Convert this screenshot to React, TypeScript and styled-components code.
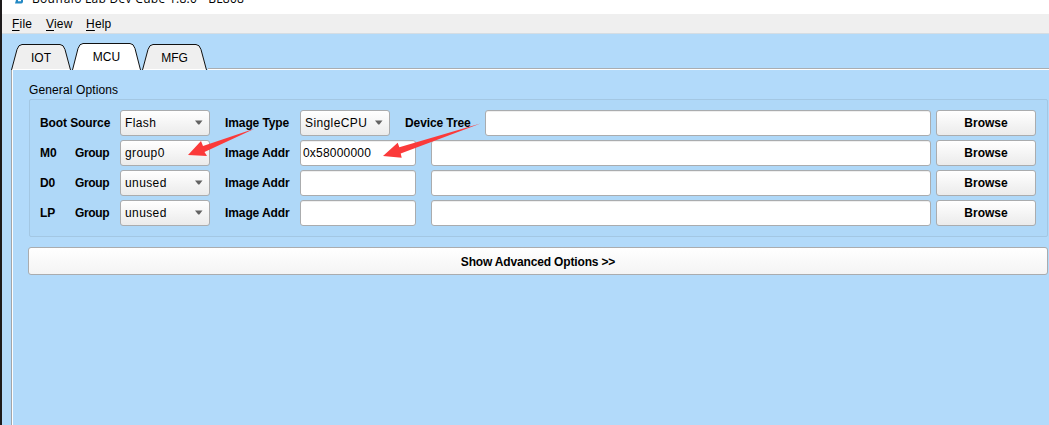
import React from "react";
import styled, { createGlobalStyle } from "styled-components";

const Global = createGlobalStyle`
  * { box-sizing: border-box; }
  html, body { margin: 0; padding: 0; overflow: hidden; }
  body { font: 12px "Liberation Sans", Arial, sans-serif; color: #000; }
`;

const Shell = styled.div`
  position: relative;
  width: 1049px;
  height: 425px;
  display: flex;
  background: #b2dafa;
  overflow: hidden;
`;
const DesktopEdge = styled.div`
  flex: 0 0 2px;
  background: #1d1a1b;
`;
const Window = styled.div`
  flex: 1;
  min-width: 0;
  display: flex;
  flex-direction: column;
`;
const TitleBar = styled.div`
  height: 14px;
  background: #fff;
  display: flex;
  align-items: flex-end;
  padding-left: 13px;
  overflow: hidden;
`;
const AppIcon = styled.svg`
  flex: none;
  width: 9px;
  height: 14px;
`;
const Title = styled.span`
  margin-left: 8px;
  height: 17px;
  font: 12px/17px "Open Sans", sans-serif;
  letter-spacing: 0.29px;
  white-space: pre;
  position: relative;
  top: -7px;
`;
const MenuBar = styled.nav`
  height: 20px;
  background: #efefef;
  border-bottom: 1px solid #d5dde3;
  display: flex;
  gap: 14px;
  padding-left: 10px;
  line-height: 20px;
`;
const MenuItem = styled.span<{ $w: number }>`
  width: ${(p) => p.$w}px;
  letter-spacing: 0.2px;
  white-space: nowrap;
  &::first-letter { text-decoration: underline; text-underline-offset: 2px; }
`;
const Tabs = styled.div`
  display: flex;
  align-items: flex-end;
  height: 36px;
  padding-left: 9px;
`;
const TabBox = styled.div<{ $w: number }>`
  width: ${(p) => p.$w}px;
  height: 28px;
  display: grid;
  margin-right: 1px;
  > * { grid-area: 1 / 1; }
`;
const TabLabel = styled.span<{ $active?: boolean }>`
  text-align: center;
  line-height: ${(p) => (p.$active ? 31 : 33)}px;
  height: 28px;
`;
const TabFill = styled.div`
  flex: 1;
  height: 2px;
  background: #fff;
  border-top: 1px solid #a9adb1;
`;
const Pane = styled.main`
  flex: 1;
  margin-left: 9px;
  border-left: 1px solid #a3a5a8;
  box-shadow: inset 1px 0 #fff;
  padding: 12px 1px 0 16px;
`;
const GroupTitle = styled.div`
  height: 17px;
  line-height: 17px;
  padding-left: 1px;
  letter-spacing: 0.12px;
`;
const Group = styled.section`
  height: 138px;
  margin-left: 1px;
  border: 1px solid #a3c7e3;
  border-radius: 2px;
  background: #afd8f8;
  padding: 10px 11px 0 10px;
  display: flex;
  flex-direction: column;
  gap: 4px;
`;
const Row = styled.div`
  display: flex;
  height: 26px;
`;
const Label = styled.span<{ $w: number; $ls?: number }>`
  flex: 0 0 ${(p) => p.$w}px;
  font-weight: bold;
  line-height: 26px;
  letter-spacing: ${(p) => p.$ls ?? -0.1}px;
  white-space: nowrap;
`;
const Select = styled.div`
  flex: 0 0 90px;
  height: 26px;
  margin-right: 15px;
  display: flex;
  align-items: center;
  justify-content: space-between;
  padding: 0 6px 0 4px;
  border: 1px solid #aaacae;
  border-radius: 3px;
  background: linear-gradient(#fff, #ebebeb);
  letter-spacing: 0.4px;
`;
const Chevron = styled.svg`
  width: 8px;
  height: 5px;
  margin-bottom: 2px;
`;
const Field = styled.div<{ $w?: number }>`
  flex: ${(p) => (p.$w ? `0 0 ${p.$w}px` : "1")};
  height: 26px;
  margin-right: ${(p) => (p.$w ? 15 : 5)}px;
  padding-left: 2px;
  line-height: 24px;
  border: 1px solid #aaacae;
  border-radius: 3px;
  background: #fff;
  box-shadow: inset 0 1px #efefef;
  letter-spacing: 0.2px;
`;
const Button = styled.button<{ $wide?: boolean }>`
  flex: 0 0 100px;
  width: ${(p) => (p.$wide ? "100%" : "100px")};
  height: ${(p) => (p.$wide ? 28 : 26)}px;
  margin-top: ${(p) => (p.$wide ? 10 : 0)}px;
  padding: ${(p) => (p.$wide ? "1px 0 0" : "0")};
  border: 1px solid #aaacae;
  border-radius: 3px;
  background: linear-gradient(#fff, ${(p) => (p.$wide ? "#f4f4f4" : "#ebebeb")});
  color: #000;
  font: bold 12px "Liberation Sans", Arial, sans-serif;
  letter-spacing: ${(p) => (p.$wide ? -0.16 : 0)}px;
`;
const Arrows = styled.svg`
  position: absolute;
  left: 0;
  top: 0;
  pointer-events: none;
`;

const Combo = ({ value }: { value: string }) => (
  <Select>
    {value}
    <Chevron viewBox="0 0 8 5"><path d="M0 0.500H7.500L4.400 4.500H3.200Z" fill="#626262" /></Chevron>
  </Select>
);

const Tab = ({ name, w, active }: { name: string; w: number; active?: boolean }) => {
  const t = active ? 1.5 : 2.5;
  return (
    <TabBox $w={w}>
      <svg width={w} height="28">
        <path
          d={`M.5 28 L6 ${t + 5} Q7.5 ${t} 11 ${t} H${w - 11} Q${w - 7.5} ${t} ${w - 6} ${t + 5} L${w - 0.5} 28`}
          fill={active ? "#fff" : "#efefef"}
          stroke="#111"
        />
        <path d={`M1.5 27.500H${w - 1.5}`} stroke="#fff" />
      </svg>
      <TabLabel $active={active}>{name}</TabLabel>
    </TabBox>
  );
};

export default function App() {
  return (
    <>
      <Global />
      <Shell>
        <DesktopEdge />
        <Window>
          <TitleBar>
            <AppIcon viewBox="0 0 9 14"><path d="M1 0H3V1.200H6V0H8V2Q7.500 3.500 6 3.500H0Z" fill="#2489c4" /></AppIcon>
            <Title>Bouffalo Lab Dev Cube 1.8.0 - BL808</Title>
          </TitleBar>
          <MenuBar>
            <MenuItem $w={20}>File</MenuItem>
            <MenuItem $w={26}>View</MenuItem>
            <MenuItem $w={27}>Help</MenuItem>
          </MenuBar>
          <Tabs>
            <Tab name="IOT" w={60} />
            <Tab name="MCU" w={69} active />
            <Tab name="MFG" w={65} />
            <TabFill />
          </Tabs>
          <Pane>
            <GroupTitle>General Options</GroupTitle>
            <Group>
              <Row>
                <Label $w={80}>Boot Source</Label>
                <Combo value="Flash" />
                <Label $w={75}>Image Type</Label>
                <Combo value="SingleCPU" />
                <Label $w={80}>Device Tree</Label>
                <Field />
                <Button>Browse</Button>
              </Row>
              {[["M0", "group0", "0x58000000"], ["D0", "unused", ""], ["LP", "unused", ""]].map(([core, group, addr]) => (
                <Row key={core}>
                  <Label $w={35}>{core}</Label>
                  <Label $w={45} $ls={-0.35}>Group</Label>
                  <Combo value={group} />
                  <Label $w={75}>Image Addr</Label>
                  <Field $w={116}>{addr}</Field>
                  <Field />
                  <Button>Browse</Button>
                </Row>
              ))}
            </Group>
            <Button $wide>Show Advanced Options &gt;&gt;</Button>
          </Pane>
        </Window>
        <Arrows width="1049" height="425" fill="#fb3a3a">
          <path d="M188 155L201 141L203 146L255 128.500L204.500 152L207 156Z" />
          <path d="M383 156L397.700 142.700L399.300 147.200L480.500 123.500L400.700 153.500L401.700 157.700Z" />
        </Arrows>
      </Shell>
    </>
  );
}
